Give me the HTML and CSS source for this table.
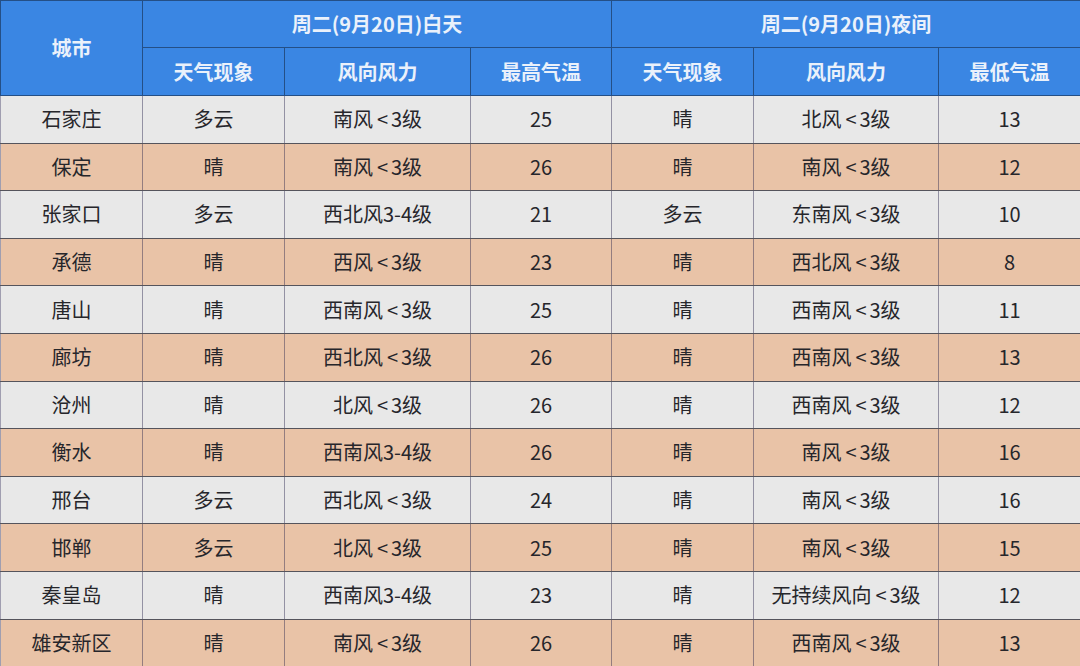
FILE: index.html
```html
<!DOCTYPE html>
<html lang="zh">
<head>
<meta charset="utf-8">
<link rel="stylesheet" href="styles.css">
</head>
<body>
<table class="wx">
  <colgroup>
    <col class="c1"><col class="c2"><col class="c3"><col class="c4"><col class="c5"><col class="c6"><col class="c7">
  </colgroup>
  <thead>
    <tr class="h1">
      <th rowspan="2">城市</th>
      <th colspan="3">周二(9月20日)白天</th>
      <th colspan="3">周二(9月20日)夜间</th>
    </tr>
    <tr class="h2">
      <th>天气现象</th><th>风向风力</th><th>最高气温</th>
      <th>天气现象</th><th>风向风力</th><th>最低气温</th>
    </tr>
  </thead>
  <tbody>
    <tr class="g"><td>石家庄</td><td>多云</td><td>南风<span class="lt">&lt;</span>3级</td><td>25</td><td>晴</td><td>北风<span class="lt">&lt;</span>3级</td><td>13</td></tr>
    <tr class="p"><td>保定</td><td>晴</td><td>南风<span class="lt">&lt;</span>3级</td><td>26</td><td>晴</td><td>南风<span class="lt">&lt;</span>3级</td><td>12</td></tr>
    <tr class="g"><td>张家口</td><td>多云</td><td>西北风3-4级</td><td>21</td><td>多云</td><td>东南风<span class="lt">&lt;</span>3级</td><td>10</td></tr>
    <tr class="p"><td>承德</td><td>晴</td><td>西风<span class="lt">&lt;</span>3级</td><td>23</td><td>晴</td><td>西北风<span class="lt">&lt;</span>3级</td><td>8</td></tr>
    <tr class="g"><td>唐山</td><td>晴</td><td>西南风<span class="lt">&lt;</span>3级</td><td>25</td><td>晴</td><td>西南风<span class="lt">&lt;</span>3级</td><td>11</td></tr>
    <tr class="p"><td>廊坊</td><td>晴</td><td>西北风<span class="lt">&lt;</span>3级</td><td>26</td><td>晴</td><td>西南风<span class="lt">&lt;</span>3级</td><td>13</td></tr>
    <tr class="g"><td>沧州</td><td>晴</td><td>北风<span class="lt">&lt;</span>3级</td><td>26</td><td>晴</td><td>西南风<span class="lt">&lt;</span>3级</td><td>12</td></tr>
    <tr class="p"><td>衡水</td><td>晴</td><td>西南风3-4级</td><td>26</td><td>晴</td><td>南风<span class="lt">&lt;</span>3级</td><td>16</td></tr>
    <tr class="g"><td>邢台</td><td>多云</td><td>西北风<span class="lt">&lt;</span>3级</td><td>24</td><td>晴</td><td>南风<span class="lt">&lt;</span>3级</td><td>16</td></tr>
    <tr class="p"><td>邯郸</td><td>多云</td><td>北风<span class="lt">&lt;</span>3级</td><td>25</td><td>晴</td><td>南风<span class="lt">&lt;</span>3级</td><td>15</td></tr>
    <tr class="g"><td>秦皇岛</td><td>晴</td><td>西南风3-4级</td><td>23</td><td>晴</td><td>无持续风向<span class="lt">&lt;</span>3级</td><td>12</td></tr>
    <tr class="p"><td>雄安新区</td><td>晴</td><td>南风<span class="lt">&lt;</span>3级</td><td>26</td><td>晴</td><td>西南风<span class="lt">&lt;</span>3级</td><td>13</td></tr>
  </tbody>
</table>
</body>
</html>
```
FILE: styles.css
```css
html, body {
  margin: 0;
  padding: 0;
  background: #ffffff;
}
body {
  font-family: "Noto Sans CJK SC", "Noto Sans", sans-serif;
  overflow: hidden;
}
.wx {
  width: 1080px;
  border-collapse: collapse;
  table-layout: fixed;
  font-size: 20px;
}
.c1 { width: 142px; }
.c2 { width: 142px; }
.c3 { width: 186px; }
.c4 { width: 141px; }
.c5 { width: 142px; }
.c6 { width: 185px; }
.c7 { width: 142px; }

.wx th, .wx td {
  padding: 0;
  text-align: center;
  vertical-align: middle;
  line-height: 1;
}
.wx th {
  background: #3a86e3;
  color: #eaf1fb;
  font-weight: 700;
  border: 1px solid #244f86;
}
.h1 th { height: 46px; }
.h2 th { height: 47px; }

.wx td {
  height: 46.6px;
  color: #26262b;
  border-top: 1px solid #55545c;
  border-bottom: 1px solid #55545c;
  border-left: 1px solid rgba(45, 40, 80, 0.45);
  border-right: 1px solid rgba(45, 40, 80, 0.45);
}
.g td { background: #e8e8e8; }
.p td { background: #e9c3a7; }

.lt {
  display: inline-block;
  margin: 0 3px 0 4px;
}
```
